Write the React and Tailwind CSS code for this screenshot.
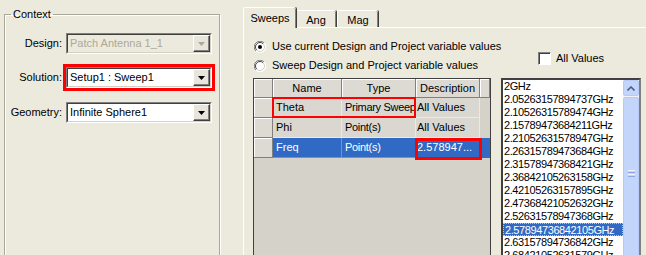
import React from 'react'

const FREQS = [
  '2GHz',
  '2.05263157894737GHz',
  '2.10526315789474GHz',
  '2.15789473684211GHz',
  '2.21052631578947GHz',
  '2.26315789473684GHz',
  '2.31578947368421GHz',
  '2.36842105263158GHz',
  '2.42105263157895GHz',
  '2.47368421052632GHz',
  '2.52631578947368GHz',
  '2.57894736842105GHz',
  '2.63157894736842GHz',
  '2.68421052631579GHz',
]

const ROWS = [
  { name: 'Theta', type: 'Primary Sweep', desc: 'All Values' },
  { name: 'Phi', type: 'Point(s)', desc: 'All Values' },
  { name: 'Freq', type: 'Point(s)', desc: '2.578947...', selected: true },
]

function Arrow({ disabled }) {
  return (
    <svg width="7" height="4" viewBox="0 0 7 4">
      <polygon points="0,0 7,0 3.5,4" fill={disabled ? '#aca899' : '#000'} />
    </svg>
  )
}

function Combo({ value, disabled }) {
  return (
    <div className="flex h-[21px] w-[146px] border border-t-[#808080] border-l-[#808080] border-b-white border-r-white">
      <div className={`flex flex-1 border border-t-[#404040] border-l-[#404040] border-b-[#d4d0c8] border-r-[#d4d0c8] ${disabled ? 'bg-[#eceadd]' : 'bg-white'}`}>
        <span className={`flex-1 truncate pl-[2px] leading-[17px] ${disabled ? 'text-[#aca899]' : 'text-black'}`}>{value}</span>
        <div className="flex w-[17px] items-center justify-center border border-t-white border-l-white border-b-[#404040] border-r-[#404040] bg-[#e8e6dc] shadow-[inset_-1px_-1px_0_#808080]">
          <Arrow disabled={disabled} />
        </div>
      </div>
    </div>
  )
}

function Radio({ checked }) {
  return (
    <svg width="12" height="12" viewBox="0 0 12 12" className="shrink-0">
      <circle cx="6" cy="6" r="5.5" fill="#fff" />
      <path d="M1.9 10.1 A5.5 5.5 0 0 1 10.1 1.9" stroke="#808080" fill="none" />
      <path d="M10.1 1.9 A5.5 5.5 0 0 1 1.9 10.1" stroke="#fff" fill="none" />
      <path d="M2.8 9.2 A4.5 4.5 0 0 1 9.2 2.8" stroke="#404040" fill="none" />
      <path d="M9.2 2.8 A4.5 4.5 0 0 1 2.8 9.2" stroke="#d4d0c8" fill="none" />
      {checked && <circle cx="6" cy="6" r="2" fill="#000" />}
    </svg>
  )
}

function HeadCell({ children, className = '' }) {
  return (
    <div className={`flex h-full items-center justify-center border-r border-b border-[#808080] bg-[#dcdad2] shadow-[inset_1px_1px_0_#fff] ${className}`}>
      {children}
    </div>
  )
}

export default function App() {
  return (
    <div className="flex h-[255px] w-[646px] overflow-hidden bg-[#eceadd] font-['Liberation_Sans',Arial,sans-serif] text-[11px] text-black">
      {/* Context group */}
      <fieldset className="ml-1 mt-[8px] h-[260px] w-[216px] shrink-0 border border-[#aca899] shadow-[inset_1px_1px_0_#fff,1px_1px_0_#fff]">
        <legend className="ml-[6px] px-[2px] leading-[13px]">Context</legend>
        <div className="flex flex-col gap-[13px] pt-[12px]">
          <div className="flex items-center gap-[4px]">
            <span className="w-[57px] text-right">Design:</span>
            <Combo value="Patch Antenna 1_1" disabled />
          </div>
          <div className="flex items-center gap-[4px]">
            <span className="w-[57px] text-right">Solution:</span>
            <div className="relative">
              <Combo value="Setup1 : Sweep1" />
              <div className="absolute -inset-[3px] border-[3px] border-[#ff0000]" />
            </div>
          </div>
          <div className="mt-[1px] flex items-center gap-[4px]">
            <span className="w-[57px] text-right">Geometry:</span>
            <Combo value="Infinite Sphere1" />
          </div>
        </div>
      </fieldset>

      {/* Tabs */}
      <div className="ml-[23px] flex flex-1 flex-col">
        <div className="flex h-[27px] shrink-0 items-end">
          <div className="relative z-10 -mb-px flex h-[21px] w-[53px] justify-center rounded-t-[2px] border-l border-t border-white bg-[#eceadd] pt-[3px] leading-[14px] shadow-[inset_-1px_0_0_#808080,1px_0_0_#404040]">
            Sweeps
          </div>
          <div className="flex h-[17px] w-[40px] justify-center rounded-t-[2px] border-t border-white pt-[2px] leading-[14px] shadow-[inset_-1px_0_0_#808080,1px_0_0_#404040]">
            Ang
          </div>
          <div className="ml-px flex h-[17px] w-[41px] justify-center rounded-t-[2px] border-l border-t border-white pt-[2px] leading-[14px] shadow-[inset_-1px_0_0_#808080,1px_0_0_#404040]">
            Mag
          </div>
        </div>

        <div className="flex min-h-0 flex-1 gap-[10px] border-l border-t border-white pl-[9px] pt-[9px]">
          {/* Left column: radios + grid */}
          <div className="flex w-[238px] shrink-0 flex-col">
            <div className="ml-px flex h-[19px] shrink-0 items-center gap-[6px] whitespace-nowrap">
              <Radio checked />
              <span>Use current Design and Project variable values</span>
            </div>
            <div className="ml-px flex h-[19px] shrink-0 items-center gap-[6px] whitespace-nowrap">
              <Radio />
              <span>Sweep Design and Project variable values</span>
            </div>

            <div className="relative mt-[3px] h-[190px] shrink-0 border border-[#404040] bg-[#d5d2c9]">
              <div className="grid h-[19px] grid-cols-[19px_69px_74px_64px_10px]">
                <HeadCell />
                <HeadCell>Name</HeadCell>
                <HeadCell>Type</HeadCell>
                <HeadCell>Description</HeadCell>
                <HeadCell />
              </div>
              {ROWS.map(r => (
                <div key={r.name} className="grid h-[20px] grid-cols-[19px_69px_74px_64px_10px]">
                  <HeadCell />
                  <div className={`truncate border-r border-b pl-[3px] leading-[19px] ${r.selected ? 'border-[#6d93d6] bg-[#316ac5] text-white' : 'border-[#ebe9e2] bg-[#d9d7cf]'}`}>{r.name}</div>
                  <div className={`overflow-hidden whitespace-nowrap border-r border-b pl-[3px] leading-[19px] tracking-[-0.3px] ${r.selected ? 'border-[#6d93d6] bg-[#316ac5] text-white' : 'border-[#ebe9e2] bg-[#d9d7cf]'}`}>{r.type}</div>
                  <div className={`overflow-hidden whitespace-nowrap border-r border-b pl-[1px] leading-[19px] ${r.selected ? 'border-[#6d93d6] bg-[#316ac5] text-white' : 'border-[#ebe9e2] bg-[#d9d7cf]'}`}>{r.desc}</div>
                  <div className={r.selected ? 'bg-[#316ac5]' : ''} />
                </div>
              ))}
              <div className="absolute left-[18px] top-[18px] h-[21px] w-[144px] border-2 border-[#ff0000]" />
              <div className="absolute left-[161px] top-[59px] h-[22px] w-[67px] border-[3px] border-[#ff0000]" />
            </div>
          </div>

          {/* Right column: checkbox + listbox */}
          <div className="flex flex-col">
            <div className="ml-[37px] mt-[15px] flex h-[13px] shrink-0 items-center gap-[5px] whitespace-nowrap">
              <div className="h-[13px] w-[13px] shrink-0 border border-t-[#808080] border-l-[#808080] border-b-white border-r-white bg-white shadow-[inset_1px_1px_0_#404040]" />
              <span>All Values</span>
            </div>
            <div className="mt-[13px] flex h-[190px] w-[140px] shrink-0 border-2 border-t-[#404040] border-l-[#404040] border-b-white border-r-[#808080] bg-white">
              <div className="flex w-[120px] flex-col overflow-hidden">
                {FREQS.map((f, i) => (
                  <div
                    key={f}
                    className={`h-[13px] shrink-0 whitespace-nowrap pl-[1px] leading-[13px] tracking-[-0.4px] ${i === 11 ? 'border border-dotted border-[#e8c070] bg-[#316ac5] leading-[11px] text-white' : ''}`}
                  >
                    {f}
                  </div>
                ))}
              </div>
              <div className="flex w-[16px] flex-col bg-[#f2f3f7]">
                <div className="flex h-[16px] items-center justify-center rounded-[2px] border border-[#b7caf5] bg-[#c4d5fc]">
                  <svg width="8" height="5" viewBox="0 0 8 5">
                    <path d="M0.5 4.5 L4 1 L7.5 4.5" stroke="#4d6185" strokeWidth="1.6" fill="none" />
                  </svg>
                </div>
                <div className="mt-px flex flex-1 flex-col items-center rounded-[2px] border border-[#b7caf5] bg-[#c4d5fc] pt-[72px]">
                  <div className="flex flex-col gap-[1px]">
                    <div className="h-px w-[7px] bg-[#eef3fe]" />
                    <div className="h-px w-[7px] bg-[#8ca6e8]" />
                    <div className="h-px w-[7px] bg-[#eef3fe]" />
                    <div className="h-px w-[7px] bg-[#8ca6e8]" />
                  </div>
                </div>
              </div>
            </div>
          </div>
        </div>
      </div>
    </div>
  )
}
